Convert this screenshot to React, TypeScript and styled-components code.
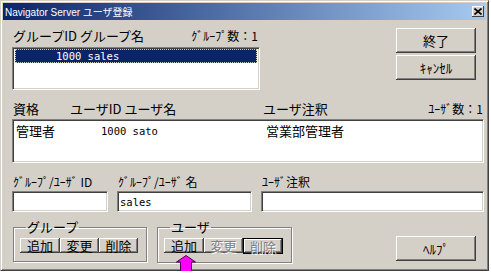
import styled, { createGlobalStyle } from "styled-components";

const GlobalStyle = createGlobalStyle`
  html, body {
    margin: 0;
    padding: 0;
    background: #ffffff;
  }
  body {
    font-family: "Noto Sans CJK JP", sans-serif;
    color: #000;
  }
`;

const JP = `"Noto Sans CJK JP", sans-serif`;
const MONO = `"DejaVu Sans Mono", "Noto Sans CJK JP", monospace`;

const Window = styled.div`
  position: relative;
  width: 489px;
  height: 271px;
  box-sizing: border-box;
  background: #d4d0c8;
  border: 1px solid;
  border-color: #d4d0c8 #404040 #404040 #d4d0c8;
  box-shadow: inset 1px 1px #ffffff, inset -1px -1px #808080;
  padding: 2px;
  display: flex;
  flex-direction: column;
`;

const TitleBar = styled.div`
  height: 17px;
  display: flex;
  align-items: center;
  padding: 0 2px 0 2px;
  background: linear-gradient(to right, #0a246a, #a6caf0);
`;

const TitleText = styled.span`
  font-family: "Liberation Sans", ${JP};
  font-size: 10px;
  color: #ffffff;
  white-space: nowrap;
`;

const CloseBox = styled.div`
  margin-left: auto;
  width: 12px;
  height: 11px;
  box-sizing: border-box;
  background: #d4d0c8;
  box-shadow: inset -1px -1px #404040, inset 1px 1px #ffffff;
  display: flex;
  align-items: center;
  justify-content: center;
`;

const Content = styled.div`
  flex: 1;
  display: flex;
  flex-direction: column;
  padding: 0 2px 0 9px;
`;

const TopSection = styled.div`
  display: flex;
  margin-top: 7px;
`;

const GroupPane = styled.div`
  width: 248px;
  display: flex;
  flex-direction: column;
`;

const HeaderRow = styled.div`
  display: flex;
  justify-content: space-between;
  align-items: center;
  height: 16px;
  padding: 0 2px 0 1px;
  font-family: ${JP};
  font-size: 13px;
  white-space: nowrap;
`;

const SmallCount = styled.span`
  font-family: ${JP};
  font-size: 12px;
`;

const ListBox = styled.div<{ $h: number }>`
  margin-top: 4px;
  height: ${(p) => p.$h}px;
  box-sizing: border-box;
  background: #ffffff;
  border: 1px solid;
  border-color: #808080 #ffffff #ffffff #808080;
  box-shadow: inset 1px 1px #404040, inset -1px -1px #d4d0c8;
  padding: 1px 2px;
`;

const GroupRow = styled.div<{ $selected?: boolean }>`
  height: 14px;
  display: flex;
  align-items: center;
  padding-left: 41px;
  box-sizing: border-box;
  font-family: ${MONO};
  font-size: 10.5px;
  white-space: pre;
  background: ${(p) => (p.$selected ? "#0a246a" : "transparent")};
  color: ${(p) => (p.$selected ? "#ffffff" : "#000000")};
  outline: ${(p) => (p.$selected ? "1px dotted #d4d0c8" : "none")};
  outline-offset: -1px;
`;

const SideButtons = styled.div`
  margin-left: auto;
  margin-right: 8px;
  margin-top: 1px;
  display: flex;
  flex-direction: column;
  gap: 2px;
`;

const Button = styled.button<{ $w: number; $h: number; $disabled?: boolean; $default?: boolean }>`
  width: ${(p) => p.$w}px;
  height: ${(p) => p.$h}px;
  margin: 0;
  padding: 0;
  box-sizing: border-box;
  background: #d4d0c8;
  border: ${(p) => (p.$default ? "1px solid #000000" : "none")};
  box-shadow: inset -1px -1px #404040, inset 1px 1px #ffffff,
    inset -2px -2px #808080, inset 2px 2px #d4d0c8;
  font-family: ${JP};
  font-size: 13px;
  line-height: 1;
  white-space: nowrap;
  color: ${(p) => (p.$disabled ? "#808080" : "#000000")};
  text-shadow: ${(p) => (p.$disabled ? "1px 1px 0 #ffffff" : "none")};
  display: flex;
  align-items: center;
  justify-content: center;
`;

const UserHeader = styled.div`
  margin-top: 9px;
  height: 16px;
  display: grid;
  grid-template-columns: 57px 193px 1fr auto;
  align-items: center;
  padding: 0 1px 0 1px;
  font-family: ${JP};
  font-size: 13px;
  white-space: nowrap;
`;

const UserRow = styled.div`
  display: grid;
  grid-template-columns: 85px 165px 1fr;
  align-items: center;
  height: 14px;
  padding-left: 1px;
  font-family: ${JP};
  font-size: 13px;
  white-space: pre;
`;

const MonoCell = styled.span`
  font-family: ${MONO};
  font-size: 10.5px;
`;

const FieldGrid = styled.div<{ $top: number }>`
  display: grid;
  grid-template-columns: 96px 135px 223px;
  column-gap: 9px;
  margin-top: ${(p) => p.$top}px;
`;

const FieldLabel = styled.div`
  height: 15px;
  display: flex;
  align-items: center;
  padding-left: 1px;
  font-family: ${JP};
  font-size: 12px;
  white-space: pre;
`;

const TextBox = styled.div`
  height: 21px;
  box-sizing: border-box;
  background: #ffffff;
  border: 1px solid;
  border-color: #808080 #ffffff #ffffff #808080;
  box-shadow: inset 1px 1px #404040, inset -1px -1px #d4d0c8;
  padding: 0 2px;
  display: flex;
  align-items: center;
  font-family: ${MONO};
  font-size: 10.5px;
`;

const BottomRow = styled.div`
  display: flex;
  align-items: flex-start;
  margin-top: 10px;
  padding-left: 1px;
`;

const GroupBox = styled.fieldset<{ $w: number; $gap?: number }>`
  width: ${(p) => p.$w}px;
  margin: 0 0 0 ${(p) => p.$gap ?? 0}px;
  padding: 6px 0 8px 6px;
  box-sizing: border-box;
  border: 1px solid #808080;
  box-shadow: inset 1px 1px #ffffff, 1px 1px #ffffff;
  display: flex;
`;

const Legend = styled.legend`
  margin-left: 6px;
  padding: 0 1px;
  font-family: ${JP};
  font-size: 13px;
  line-height: 10px;
  height: 10px;
`;

const HelpWrap = styled.div`
  margin-left: auto;
  margin-right: 8px;
  margin-top: 14px;
`;

const Arrow = styled.svg`
  position: absolute;
  left: 175px;
  top: 254px;
`;

const CloseIcon = () => (
  <svg width="8" height="7" viewBox="0 0 8 7">
    <path d="M0.5 0.5 L7.5 6.5 M7.5 0.5 L0.5 6.5" stroke="#000" strokeWidth="1.6" />
  </svg>
);

const App = () => {
  return (
    <>
      <GlobalStyle />
      <Window>
        <TitleBar>
          <TitleText>Navigator Server ユーザ登録</TitleText>
          <CloseBox>
            <CloseIcon />
          </CloseBox>
        </TitleBar>
        <Content>
          <TopSection>
            <GroupPane>
              <HeaderRow>
                <span>グループID グループ名</span>
                <SmallCount>ｸﾞﾙｰﾌﾟ数：1</SmallCount>
              </HeaderRow>
              <ListBox $h={43}>
                <GroupRow $selected>1000 sales</GroupRow>
              </ListBox>
            </GroupPane>
            <SideButtons>
              <Button $w={80} $h={25}>終了</Button>
              <Button $w={80} $h={25}>ｷｬﾝｾﾙ</Button>
            </SideButtons>
          </TopSection>

          <UserHeader>
            <span>資格</span>
            <span>ユーザID ユーザ名</span>
            <span>ユーザ注釈</span>
            <SmallCount>ﾕｰｻﾞ数：1</SmallCount>
          </UserHeader>
          <ListBox $h={44}>
            <UserRow>
              <span>管理者</span>
              <MonoCell>1000 sato</MonoCell>
              <span>営業部管理者</span>
            </UserRow>
          </ListBox>

          <FieldGrid $top={11}>
            <FieldLabel>ｸﾞﾙｰﾌﾟ/ﾕｰｻﾞ ID</FieldLabel>
            <FieldLabel>ｸﾞﾙｰﾌﾟ/ﾕｰｻﾞ 名</FieldLabel>
            <FieldLabel>ﾕｰｻﾞ注釈</FieldLabel>
          </FieldGrid>
          <FieldGrid $top={2}>
            <TextBox />
            <TextBox>sales</TextBox>
            <TextBox />
          </FieldGrid>

          <BottomRow>
            <GroupBox $w={134}>
              <Legend>グループ</Legend>
              <Button $w={40} $h={15}>追加</Button>
              <Button $w={39} $h={15}>変更</Button>
              <Button $w={39} $h={15}>削除</Button>
            </GroupBox>
            <GroupBox $w={135} $gap={10}>
              <Legend>ユーザ</Legend>
              <Button $w={40} $h={15}>追加</Button>
              <Button $w={39} $h={15} $disabled>変更</Button>
              <Button $w={40} $h={16} $disabled $default>削除</Button>
            </GroupBox>
            <HelpWrap>
              <Button $w={80} $h={25}>ﾍﾙﾌﾟ</Button>
            </HelpWrap>
          </BottomRow>
        </Content>
        <Arrow width="20" height="20" viewBox="0 0 20 20">
          <path
            d="M10 0.5 L19.5 7 L15.5 7 L15.5 19.5 L4.5 19.5 L4.5 7 L0.5 7 Z"
            fill="#ff00ff"
            stroke="#500050"
            strokeWidth="1"
          />
        </Arrow>
      </Window>
    </>
  );
};

export default App;
